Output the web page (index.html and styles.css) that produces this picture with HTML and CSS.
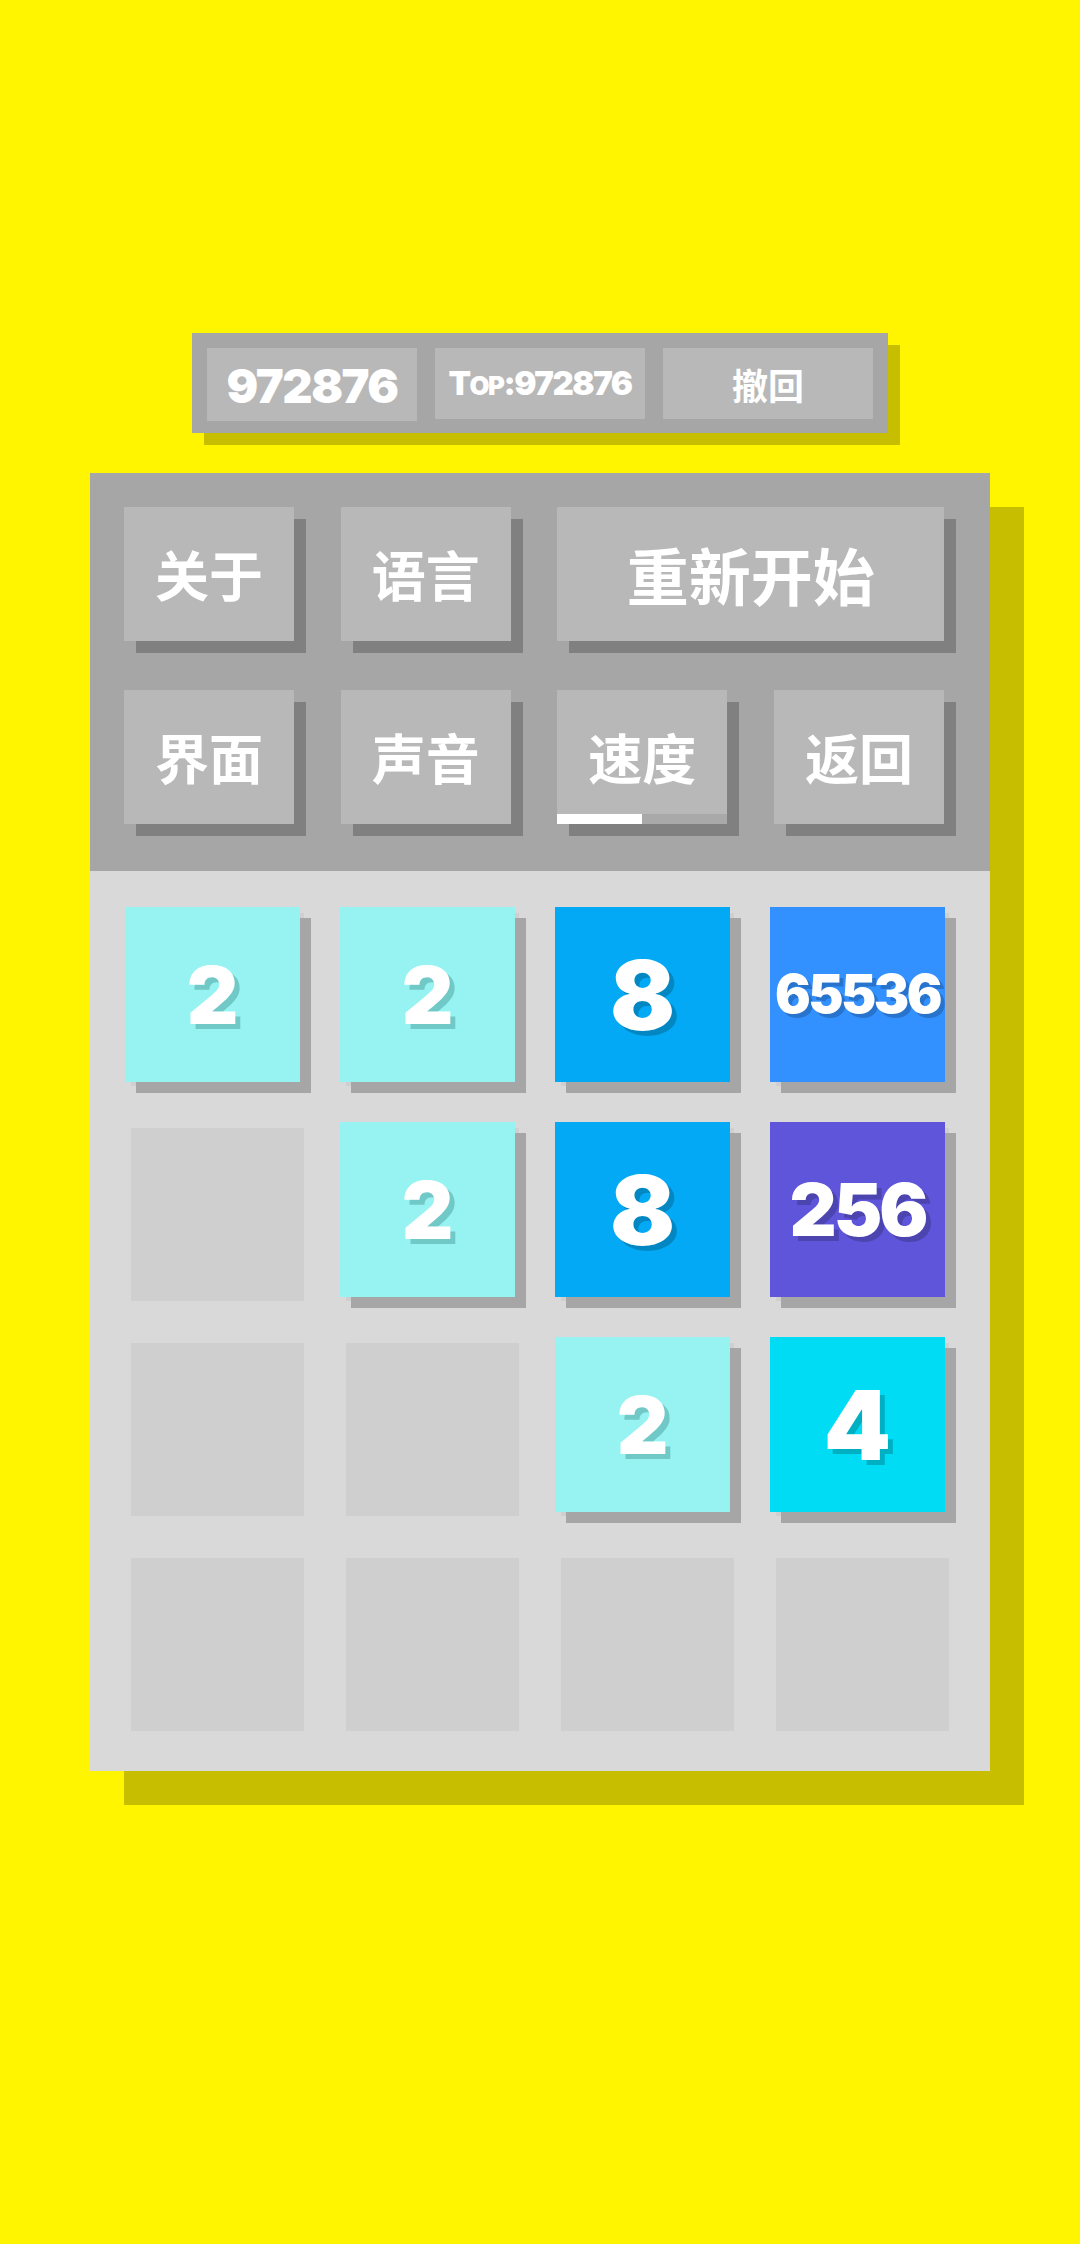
FILE: index.html
```html
<!DOCTYPE html>
<html lang="zh-CN">
<head>
<meta charset="utf-8">
<title>2048</title>
<link rel="stylesheet" href="styles.css">
</head>
<body>
<div class="page">
  <div class="topbar">
    <div class="tb-box tb-score">972876</div>
    <div class="tb-box tb-top">T<span class="smallcap">op</span>:972876</div>
    <div class="tb-box tb-undo">撤回</div>
  </div>

  <div class="panel">
    <div class="menu">
      <div class="btn">关于</div>
      <div class="btn">语言</div>
      <div class="btn btn-wide">重新开始</div>
      <div class="btn">界面</div>
      <div class="btn">声音</div>
      <div class="btn btn-speed">速度<div class="speed-bar"><div class="speed-fill"></div></div></div>
      <div class="btn">返回</div>
    </div>

    <div class="board">
      <div class="cell"><div class="tile t2">2</div></div>
      <div class="cell"><div class="tile t2">2</div></div>
      <div class="cell"><div class="tile t8">8</div></div>
      <div class="cell"><div class="tile t65536">65536</div></div>

      <div class="cell"></div>
      <div class="cell"><div class="tile t2">2</div></div>
      <div class="cell"><div class="tile t8">8</div></div>
      <div class="cell"><div class="tile t256">256</div></div>

      <div class="cell"></div>
      <div class="cell"></div>
      <div class="cell"><div class="tile t2">2</div></div>
      <div class="cell"><div class="tile t4">4</div></div>

      <div class="cell"></div>
      <div class="cell"></div>
      <div class="cell"></div>
      <div class="cell"></div>
    </div>
  </div>
</div>
</body>
</html>
```

FILE: styles.css
```css
html, body {
  margin: 0;
  padding: 0;
}

body {
  background: #fff500;
  width: 1080px;
  height: 2244px;
  overflow: hidden;
  font-family: "Noto Sans CJK SC", "Noto Sans", sans-serif;
  color: #ffffff;
}

.page {
  display: flex;
  flex-direction: column;
  padding-top: 333px;
}

/* ---------- top bar ---------- */
.topbar {
  margin-left: 192px;
  width: 696px;
  height: 100px;
  box-sizing: border-box;
  padding: 15px 15px 14px 15px;
  background: #a6a6a6;
  box-shadow: 12px 12px 0 #c8be00;
  display: flex;
  gap: 18px;
}

.tb-box {
  width: 210px;
  height: 71px;
  background: #b8b8b8;
  display: flex;
  align-items: center;
  justify-content: center;
  color: #ffffff;
  font-weight: 900;
}

.tb-score {
  font-family: Inter, Lato, "Noto Sans", sans-serif;
  font-size: 47px;
  letter-spacing: -1.5px;
  padding-top: 2px;
}

.tb-top {
  font-family: Inter, Lato, "Noto Sans", sans-serif;
  font-size: 33px;
  letter-spacing: -1.5px;
  align-items: baseline;
  line-height: 71px;
}

.smallcap {
  text-transform: uppercase;
  font-size: 0.78em;
}

.tb-undo {
  font-size: 36px;
  font-weight: 700;
}

/* ---------- panel ---------- */
.panel {
  margin-top: 40px;
  margin-left: 90px;
  width: 900px;
  box-shadow: 34px 34px 0 #c8be00;
  display: flex;
  flex-direction: column;
}

.menu {
  height: 398px;
  box-sizing: border-box;
  background: #a6a6a6;
  padding: 34px 0 0 34px;
  display: grid;
  grid-template-columns: repeat(4, 170px);
  grid-template-rows: 134px 134px;
  column-gap: 46.67px;
  row-gap: 49px;
}

.btn {
  position: relative;
  background: #b8b8b8;
  box-shadow: 12px 12px 0 #808080;
  display: flex;
  align-items: center;
  justify-content: center;
  font-size: 54px;
  font-weight: 700;
  color: #ffffff;
  line-height: 1;
}

.btn-wide {
  grid-column: span 2;
  font-size: 62px;
}

.speed-bar {
  position: absolute;
  left: 0;
  right: 0;
  bottom: 0;
  height: 10px;
  background: #a9a9a9;
}

.speed-fill {
  width: 50%;
  height: 100%;
  background: #ffffff;
}

/* ---------- board ---------- */
.board {
  height: 900px;
  box-sizing: border-box;
  background: #d9d9d9;
  padding: 42px 41px 40px 41px;
  display: grid;
  grid-template-columns: repeat(4, 173px);
  grid-template-rows: repeat(4, 173px);
  column-gap: 42px;
  row-gap: 42px;
}

.cell {
  position: relative;
  background: #cfcfcf;
}

.tile {
  position: absolute;
  left: -6px;
  top: -6px;
  width: 175px;
  height: 175px;
  box-shadow: 11px 11px 0 #a6a6a6;
  display: flex;
  align-items: center;
  justify-content: center;
  font-family: Inter, Lato, "Noto Sans", sans-serif;
  font-weight: 900;
  color: #ffffff;
  line-height: 1;
  text-shadow: 5px 5px 0 rgba(0, 0, 0, 0.2);
}

.t2 {
  background: #97f3f1;
  font-size: 80px;
  text-shadow: 5px 5px 0 rgba(40, 120, 120, 0.35);
}

.t4 {
  background: #00dcf3;
  font-size: 96px;
}

.t8 {
  background: #03a9f4;
  font-size: 96px;
}

.t256 {
  background: #5f55db;
  font-size: 73px;
  letter-spacing: -3px;
}

.t65536 {
  background: #3390ff;
  font-size: 53px;
  letter-spacing: -2.5px;
  text-shadow: 4px 4px 0 rgba(0, 0, 0, 0.2);
}
```
